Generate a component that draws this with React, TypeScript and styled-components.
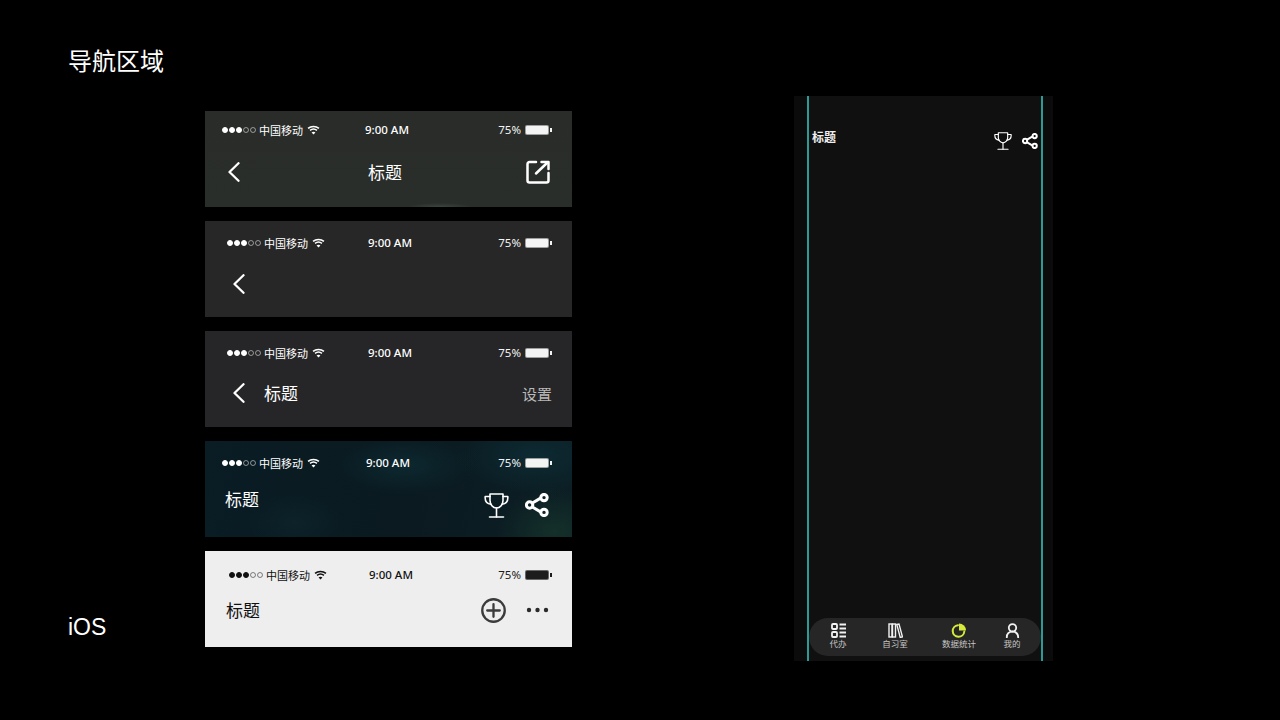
import React from "react";
import styled, { createGlobalStyle } from "styled-components";

const CJK = `"Noto Sans CJK SC", "Noto Sans", sans-serif`;

const GlobalStyle = createGlobalStyle`
  html, body {
    margin: 0;
    padding: 0;
    background: #000;
  }
  * {
    box-sizing: border-box;
  }
`;

const Page = styled.div`
  width: 1280px;
  height: 720px;
  overflow: hidden;
  background: #000;
  display: flex;
  font-family: ${CJK};
  color: #fff;
`;

const Captions = styled.div`
  width: 205px;
  padding: 43px 0 76px 68px;
  display: flex;
  flex-direction: column;
  justify-content: space-between;
`;

const Heading = styled.h1`
  margin: 0;
  font-size: 24px;
  line-height: 34px;
  font-weight: 400;
  white-space: nowrap;
`;

const Platform = styled.div`
  font-family: "Liberation Sans", Arial, sans-serif;
  font-size: 23px;
  line-height: 34px;
`;

const BarList = styled.div`
  width: 367px;
  padding-top: 111px;
  display: flex;
  flex-direction: column;
  gap: 14px;
`;

const Bar = styled.section<{ $bg: string; $light?: boolean }>`
  height: 96px;
  background: ${(p) => p.$bg};
  color: ${(p) => (p.$light ? "#111" : "#fff")};
`;

const Status = styled.div<{ $h: number; $pad: number; $left: number }>`
  height: ${(p) => p.$h}px;
  padding: 0 23px 1px ${(p) => p.$pad}px;
  display: flex;
  align-items: center;
  font-size: 11px;

  & > :first-child {
    width: ${(p) => p.$left}px;
  }
`;

const Carrier = styled.div`
  display: flex;
  align-items: center;
  white-space: nowrap;
`;

const Dot = styled.i<{ $on?: boolean }>`
  display: block;
  flex: none;
  width: 6px;
  height: 6px;
  margin-right: 1px;
  border-radius: 50%;
  border: 1px solid currentColor;
  background: ${(p) => (p.$on ? "currentColor" : "transparent")};
  opacity: ${(p) => (p.$on ? 1 : 0.5)};
`;

const CarrierName = styled.span`
  margin: 0 4px 0 2px;
`;

const Time = styled.span`
  font-family: "Noto Sans", "Open Sans", sans-serif;
  font-size: 11.5px;
  font-weight: 500;
  white-space: nowrap;
`;

const Power = styled.div`
  margin-left: auto;
  display: flex;
  align-items: center;
  gap: 4px;
  font-family: "Noto Sans", "Open Sans", sans-serif;
  font-size: 11.5px;
  opacity: 0.95;
`;

const Battery = styled.div`
  position: relative;
  width: 24px;
  height: 10px;
  border-radius: 2px;
  background: currentColor;
  border: 1px solid rgba(128, 128, 128, 0.7);

  &::after {
    content: "";
    position: absolute;
    right: -4px;
    top: 2px;
    width: 2px;
    height: 4px;
    background: currentColor;
  }
`;

const Nav = styled.div<{ $h: number; $pad: number }>`
  height: ${(p) => p.$h}px;
  padding: 0 22px 0 ${(p) => p.$pad}px;
  display: flex;
  align-items: center;
`;

const BackButton = styled.svg`
  display: block;
  width: 12px;
  height: 20px;
`;

const Title = styled.span<{ $ml?: number; $lift?: number }>`
  margin-left: ${(p) => p.$ml ?? 0}px;
  margin-bottom: ${(p) => p.$lift ?? 0}px;
  font-size: 17px;
  line-height: 24px;
  white-space: nowrap;
`;

const Actions = styled.div<{ $gap?: number; $mr?: number }>`
  margin-left: auto;
  margin-right: ${(p) => p.$mr ?? 0}px;
  display: flex;
  align-items: center;
  gap: ${(p) => p.$gap ?? 0}px;
`;

const TextAction = styled.span`
  margin-right: -2px;
  font-size: 15px;
  color: #b9b9b9;
`;

const PhoneWrap = styled.div`
  margin-left: 222px;
  padding-top: 96px;
`;

const Phone = styled.div`
  width: 259px;
  height: 565px;
  padding: 0 10px 0 13px;
  background: #0b0b0b;
`;

const Screen = styled.div`
  height: 100%;
  display: flex;
  flex-direction: column;
  background: #101010;
  border-left: 2px solid #2f9a94;
  border-right: 2px solid #2f9a94;
  padding: 0 0 5px;
`;

const ScreenHeader = styled.div`
  margin-top: 34px;
  height: 22px;
  padding: 0 3px;
  display: flex;
  align-items: center;
`;

const ScreenTitle = styled.span`
  margin-bottom: 8px;
  font-size: 12px;
  line-height: 16px;
  font-weight: 700;
  color: #eee;
`;

const TabBar = styled.nav`
  margin: auto 0 0;
  height: 38px;
  border-radius: 19px;
  background: #262626;
  display: grid;
  grid-template-columns: 58px 56px 72px 34px;
`;

const Tab = styled.div`
  display: flex;
  flex-direction: column;
  align-items: center;
  padding-top: 5px;
  color: #f2f2f2;
`;

const TabLabel = styled.span`
  margin-top: 0;
  font-size: 8.5px;
  line-height: 11px;
  color: #c6c6c6;
  white-space: nowrap;
`;

const Wifi = () => (
  <svg width="13" height="10" viewBox="0 0 14 11" fill="none" stroke="currentColor" strokeWidth="1.7">
    <path d="M1 3.8C4.4 .9 9.6 .9 13 3.8" />
    <path d="M3.2 6C5.4 4.2 8.6 4.2 10.8 6" />
    <path d="M7 10.4 4.9 8.2C6.1 7.2 7.9 7.2 9.1 8.2Z" fill="currentColor" stroke="none" />
  </svg>
);

const StatusRow = ({ h, pad, left }: { h: number; pad: number; left: number }) => (
  <Status $h={h} $pad={pad} $left={left}>
    <Carrier>
      <Dot $on />
      <Dot $on />
      <Dot $on />
      <Dot />
      <Dot />
      <CarrierName>中国移动</CarrierName>
      <Wifi />
    </Carrier>
    <Time>9:00 AM</Time>
    <Power>
      75%
      <Battery />
    </Power>
  </Status>
);

const Back = () => (
  <BackButton viewBox="0 0 12 20" fill="none" stroke="#fff" strokeWidth="2.3" strokeLinecap="round" strokeLinejoin="round">
    <path d="M10.5 1.2 1.5 10l9 8.8" />
  </BackButton>
);

const ExternalIcon = () => (
  <svg width="24" height="24" viewBox="0 0 24 24" fill="none" stroke="#fff" strokeWidth="2.5" strokeLinecap="round" strokeLinejoin="round">
    <path d="M10 2H3.500a2 2 0 0 0-2 2v16.500a2 2 0 0 0 2 2h17a2 2 0 0 0 2-2V13" />
    <path d="M10 13.500 21.500 2.500" />
    <path d="M15.500 2h7v7" />
  </svg>
);

const TrophyIcon = ({ size }: { size: number }) => (
  <svg width={size} height={size} viewBox="0 0 25 25" fill="none" stroke="currentColor" strokeWidth="1.6" strokeLinecap="round" strokeLinejoin="round">
    <path d="M6 1h13v6.500c0 4-2.800 7.500-6.500 7.500S6 11.500 6 7.500Z" />
    <path d="M6 3.500H1.200C.8 8 3 10.800 7 11.300" />
    <path d="M19 3.500h4.800c.4 4.500-1.800 7.300-5.800 7.800" />
    <path d="M12.500 15v9" />
    <path d="M5.500 24h14" />
  </svg>
);

const ShareIcon = ({ size }: { size: number }) => (
  <svg width={size} height={size} viewBox="0 0 24 24" fill="none" stroke="#fff" strokeWidth="3">
    <path d="M7 10.200 16 4.900M7 13.800l9 5.300" />
    <circle cx="4.600" cy="12" r="3.200" />
    <circle cx="19" cy="4.600" r="3.200" />
    <circle cx="19" cy="19.400" r="3.200" />
  </svg>
);

const PlusIcon = () => (
  <svg width="25" height="25" viewBox="0 0 26 26" fill="none" stroke="#3b3b3b" strokeWidth="2.400" strokeLinecap="round">
    <circle cx="13" cy="13" r="11.700" />
    <path d="M13 6.500v13M6.500 13h13" />
  </svg>
);

const MoreIcon = () => (
  <svg width="23" height="6" viewBox="0 0 23 6" fill="#2a2a2a">
    <circle cx="3" cy="3" r="2.200" />
    <circle cx="11.500" cy="3" r="2.200" />
    <circle cx="20" cy="3" r="2.200" />
  </svg>
);

const TodoIcon = () => (
  <svg width="15" height="15" viewBox="0 0 15 15" fill="none" stroke="currentColor" strokeWidth="1.800">
    <rect x="1" y="1" width="5" height="5" rx="1" />
    <rect x="1" y="9" width="5" height="5" rx="1" />
    <path d="M8.500 1.500H15M8.500 5.500H15M8.500 9.500H15M8.500 13.500H15" />
  </svg>
);

const BooksIcon = () => (
  <svg width="15" height="15" viewBox="0 0 15 15" fill="none" stroke="currentColor" strokeWidth="1.400">
    <rect x="1" y="1" width="3" height="13" />
    <rect x="4.500" y="1" width="3" height="13" />
    <path d="M8.800 1.500 11 1l3.500 13-2.300.4Z" />
  </svg>
);

const PieIcon = () => (
  <svg width="16" height="15" viewBox="0 0 15 15" fill="none">
    <path d="M6.500 2.200a5.800 5.800 0 1 0 6.300 6.300" stroke="#d6ea3c" strokeWidth="2" strokeLinecap="round" />
    <path d="M7.500 0.500a7 7 0 0 1 7 7h-7Z" fill="#d6ea3c" />
  </svg>
);

const UserIcon = () => (
  <svg width="15" height="15" viewBox="0 0 15 15" fill="none" stroke="currentColor" strokeWidth="1.800" strokeLinecap="round">
    <circle cx="7.500" cy="4.800" r="3.700" />
    <path d="M1.800 14.500c0-3.500 2.200-5.800 5.700-5.800s5.700 2.300 5.700 5.800" />
  </svg>
);

const TABS = [
  { label: "代办", icon: <TodoIcon /> },
  { label: "自习室", icon: <BooksIcon /> },
  { label: "数据统计", icon: <PieIcon /> },
  { label: "我的", icon: <UserIcon /> },
];

const BG_GLOW = `radial-gradient(ellipse 32px 4px at 235px 100%, #3a463d 0%, transparent 100%), linear-gradient(#292c29, #2a2e2a)`;
const BG_TEAL = `radial-gradient(ellipse 60px 45px at 350px 95%, #14302a 0%, transparent 100%), radial-gradient(ellipse 80px 40px at 330px 15%, #0d2a33 0%, transparent 100%), radial-gradient(ellipse 70px 30px at 200px 25%, #0d2830 0%, transparent 100%), radial-gradient(ellipse 50px 30px at 90px 85%, #0d2229 0%, transparent 100%), linear-gradient(100deg, #0a1c24, #0a1a20 55%, #0c1e24)`;

export default function App() {
  return (
    <Page>
      <GlobalStyle />
      <Captions>
        <Heading>导航区域</Heading>
        <Platform>iOS</Platform>
      </Captions>
      <BarList>
        <Bar $bg={BG_GLOW}>
          <StatusRow h={38} pad={17} left={143} />
          <Nav $h={46} $pad={23}>
            <Back />
            <Title $ml={128}>标题</Title>
            <Actions>
              <ExternalIcon />
            </Actions>
          </Nav>
        </Bar>
        <Bar $bg="#272727">
          <StatusRow h={44} pad={22} left={141} />
          <Nav $h={38} $pad={28}>
            <Back />
          </Nav>
        </Bar>
        <Bar $bg="#262527">
          <StatusRow h={44} pad={22} left={141} />
          <Nav $h={36} $pad={28}>
            <Back />
            <Title $ml={19}>标题</Title>
            <Actions>
              <TextAction>设置</TextAction>
            </Actions>
          </Nav>
        </Bar>
        <Bar $bg={BG_TEAL}>
          <StatusRow h={44} pad={17} left={144} />
          <Nav $h={40} $pad={20}>
            <Title $lift={12}>标题</Title>
            <Actions $gap={16} $mr={1}>
              <TrophyIcon size={25} />
              <ShareIcon size={24} />
            </Actions>
          </Nav>
        </Bar>
        <Bar $bg="#eeeeee" $light>
          <StatusRow h={48} pad={24} left={140} />
          <Nav $h={22} $pad={21}>
            <Title>标题</Title>
            <Actions $gap={20} $mr={1}>
              <PlusIcon />
              <MoreIcon />
            </Actions>
          </Nav>
        </Bar>
      </BarList>
      <PhoneWrap>
        <Phone>
          <Screen>
            <ScreenHeader>
              <ScreenTitle>标题</ScreenTitle>
              <Actions $gap={10}>
                <TrophyIcon size={18} />
                <ShareIcon size={16} />
              </Actions>
            </ScreenHeader>
            <TabBar>
              {TABS.map((t) => (
                <Tab key={t.label}>
                  {t.icon}
                  <TabLabel>{t.label}</TabLabel>
                </Tab>
              ))}
            </TabBar>
          </Screen>
        </Phone>
      </PhoneWrap>
    </Page>
  );
}
